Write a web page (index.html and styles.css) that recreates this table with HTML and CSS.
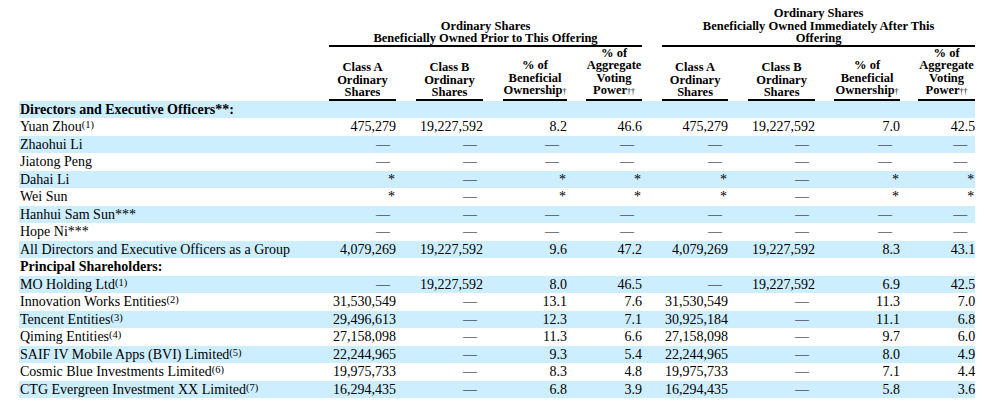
FILE: index.html
```html
<!DOCTYPE html>
<html>
<head>
<meta charset="utf-8">
<link rel="stylesheet" href="styles.css">
</head>
<body>
<div class="page">
<table class="own">
<colgroup>
<col class="w-label"><col class="w-a1"><col class="w-s20"><col class="w-b1"><col class="w-s20"><col class="w-p1"><col class="w-s19"><col class="w-v1"><col class="w-s20"><col class="w-a2"><col class="w-s20"><col class="w-b2"><col class="w-s19"><col class="w-p2"><col class="w-s18"><col class="w-v2">
</colgroup>
<thead>
<tr class="grp">
<th></th>
<th colspan="7" class="g">Ordinary Shares<br>Beneficially Owned Prior to This Offering</th>
<th></th>
<th colspan="7" class="g">Ordinary Shares<br>Beneficially Owned Immediately After This<br>Offering</th>
</tr>
<tr class="cols">
<th></th>
<th class="h">Class A<br>Ordinary<br>Shares</th><th></th>
<th class="h">Class B<br>Ordinary<br>Shares</th><th></th>
<th class="h">% of<br>Beneficial<br>Ownership<span class="dg">†</span></th><th></th>
<th class="h">% of<br>Aggregate<br>Voting<br>Power<span class="dg">††</span></th><th></th>
<th class="h">Class A<br>Ordinary<br>Shares</th><th></th>
<th class="h">Class B<br>Ordinary<br>Shares</th><th></th>
<th class="h">% of<br>Beneficial<br>Ownership<span class="dg">†</span></th><th></th>
<th class="h">% of<br>Aggregate<br>Voting<br>Power<span class="dg">††</span></th>
</tr>
</thead>
<tbody>
<tr class="sh"><td class="lbl b">Directors and Executive Officers**:</td><td></td><td></td><td></td><td></td><td></td><td></td><td></td><td></td><td></td><td></td><td></td><td></td><td></td><td></td><td></td></tr>
<tr><td class="lbl">Yuan Zhou<sup>(1)</sup></td><td>475,279</td><td></td><td>19,227,592</td><td></td><td>8.2</td><td></td><td>46.6</td><td></td><td>475,279</td><td></td><td>19,227,592</td><td></td><td>7.0</td><td></td><td>42.5</td></tr>
<tr class="sh"><td class="lbl">Zhaohui Li</td><td class="d">—</td><td></td><td class="d">—</td><td></td><td class="d2">—</td><td></td><td class="d2">—</td><td></td><td class="d">—</td><td></td><td class="d">—</td><td></td><td class="d2">—</td><td></td><td class="d2">—</td></tr>
<tr><td class="lbl">Jiatong Peng</td><td class="d">—</td><td></td><td class="d">—</td><td></td><td class="d2">—</td><td></td><td class="d2">—</td><td></td><td class="d">—</td><td></td><td class="d">—</td><td></td><td class="d2">—</td><td></td><td class="d2">—</td></tr>
<tr class="sh"><td class="lbl">Dahai Li</td><td class="st">*</td><td></td><td class="d">—</td><td></td><td class="st">*</td><td></td><td class="st">*</td><td></td><td class="st">*</td><td></td><td class="d">—</td><td></td><td class="st">*</td><td></td><td class="st">*</td></tr>
<tr><td class="lbl">Wei Sun</td><td class="st">*</td><td></td><td class="d">—</td><td></td><td class="st">*</td><td></td><td class="st">*</td><td></td><td class="st">*</td><td></td><td class="d">—</td><td></td><td class="st">*</td><td></td><td class="st">*</td></tr>
<tr class="sh"><td class="lbl">Hanhui Sam Sun***</td><td class="d">—</td><td></td><td class="d">—</td><td></td><td class="d2">—</td><td></td><td class="d2">—</td><td></td><td class="d">—</td><td></td><td class="d">—</td><td></td><td class="d2">—</td><td></td><td class="d2">—</td></tr>
<tr><td class="lbl">Hope Ni***</td><td class="d">—</td><td></td><td class="d">—</td><td></td><td class="d2">—</td><td></td><td class="d2">—</td><td></td><td class="d">—</td><td></td><td class="d">—</td><td></td><td class="d2">—</td><td></td><td class="d2">—</td></tr>
<tr class="sh"><td class="lbl">All Directors and Executive Officers as a Group</td><td>4,079,269</td><td></td><td>19,227,592</td><td></td><td>9.6</td><td></td><td>47.2</td><td></td><td>4,079,269</td><td></td><td>19,227,592</td><td></td><td>8.3</td><td></td><td>43.1</td></tr>
<tr><td class="lbl b">Principal Shareholders:</td><td></td><td></td><td></td><td></td><td></td><td></td><td></td><td></td><td></td><td></td><td></td><td></td><td></td><td></td><td></td></tr>
<tr class="sh"><td class="lbl">MO Holding Ltd<sup>(1)</sup></td><td class="d">—</td><td></td><td>19,227,592</td><td></td><td>8.0</td><td></td><td>46.5</td><td></td><td class="d">—</td><td></td><td>19,227,592</td><td></td><td>6.9</td><td></td><td>42.5</td></tr>
<tr><td class="lbl">Innovation Works Entities<sup>(2)</sup></td><td>31,530,549</td><td></td><td class="d">—</td><td></td><td>13.1</td><td></td><td>7.6</td><td></td><td>31,530,549</td><td></td><td class="d">—</td><td></td><td>11.3</td><td></td><td>7.0</td></tr>
<tr class="sh"><td class="lbl">Tencent Entities<sup>(3)</sup></td><td>29,496,613</td><td></td><td class="d">—</td><td></td><td>12.3</td><td></td><td>7.1</td><td></td><td>30,925,184</td><td></td><td class="d">—</td><td></td><td>11.1</td><td></td><td>6.8</td></tr>
<tr><td class="lbl">Qiming Entities<sup>(4)</sup></td><td>27,158,098</td><td></td><td class="d">—</td><td></td><td>11.3</td><td></td><td>6.6</td><td></td><td>27,158,098</td><td></td><td class="d">—</td><td></td><td>9.7</td><td></td><td>6.0</td></tr>
<tr class="sh"><td class="lbl">SAIF IV Mobile Apps (BVI) Limited<sup>(5)</sup></td><td>22,244,965</td><td></td><td class="d">—</td><td></td><td>9.3</td><td></td><td>5.4</td><td></td><td>22,244,965</td><td></td><td class="d">—</td><td></td><td>8.0</td><td></td><td>4.9</td></tr>
<tr><td class="lbl">Cosmic Blue Investments Limited<sup>(6)</sup></td><td>19,975,733</td><td></td><td class="d">—</td><td></td><td>8.3</td><td></td><td>4.8</td><td></td><td>19,975,733</td><td></td><td class="d">—</td><td></td><td>7.1</td><td></td><td>4.4</td></tr>
<tr class="sh"><td class="lbl">CTG Evergreen Investment XX Limited<sup>(7)</sup></td><td>16,294,435</td><td></td><td class="d">—</td><td></td><td>6.8</td><td></td><td>3.9</td><td></td><td>16,294,435</td><td></td><td class="d">—</td><td></td><td>5.8</td><td></td><td>3.6</td></tr>
</tbody>
</table>
</div>
</body>
</html>
```
FILE: styles.css
```css
html, body {
  margin: 0;
  padding: 0;
  background: #fff;
}
.page {
  padding: 7px 0 0 19px;
  font-family: "Liberation Serif", "Times New Roman", serif;
  color: #000;
}
.own {
  table-layout: fixed;
  width: 956px;
  border-collapse: separate;
  border-spacing: 0;
}
.w-label { width: 310px; }
.w-a1 { width: 67px; }
.w-b1 { width: 67px; }
.w-p1 { width: 64px; }
.w-v1 { width: 56px; }
.w-a2 { width: 66px; }
.w-b2 { width: 67px; }
.w-p2 { width: 66px; }
.w-v2 { width: 57px; }
.w-s20 { width: 20px; }
.w-s19 { width: 19px; }
.w-s18 { width: 18px; }
.own th, .own td {
  padding: 0;
}
.own th {
  font-size: 12.5px;
  font-weight: bold;
  text-align: center;
  vertical-align: bottom;
  white-space: nowrap;
}
.grp th {
  line-height: 12.5px;
}
.grp th.g {
  border-bottom: 2px solid #000;
}
.cols th {
  line-height: 12.5px;
}
.cols th.h {
  border-bottom: 2px solid #000;
}
.dg {
  font-size: 8px;
  font-weight: normal;
}
.own td {
  font-size: 14px;
  line-height: 17.5px;
  height: 17.5px;
  text-align: right;
  vertical-align: middle;
  white-space: nowrap;
}
.own td.lbl {
  text-align: left;
  padding-left: 1px;
}
.own td.b {
  font-weight: bold;
}
.own td.d {
  padding-right: 6px;
}
.own td.d2 {
  padding-right: 8px;
}
.own td.st {
  padding-right: 1px;
}
.sh td {
  background: #cdeeff;
}
sup {
  font-size: 10.5px;
  line-height: 0;
  vertical-align: 3px;
}
```
